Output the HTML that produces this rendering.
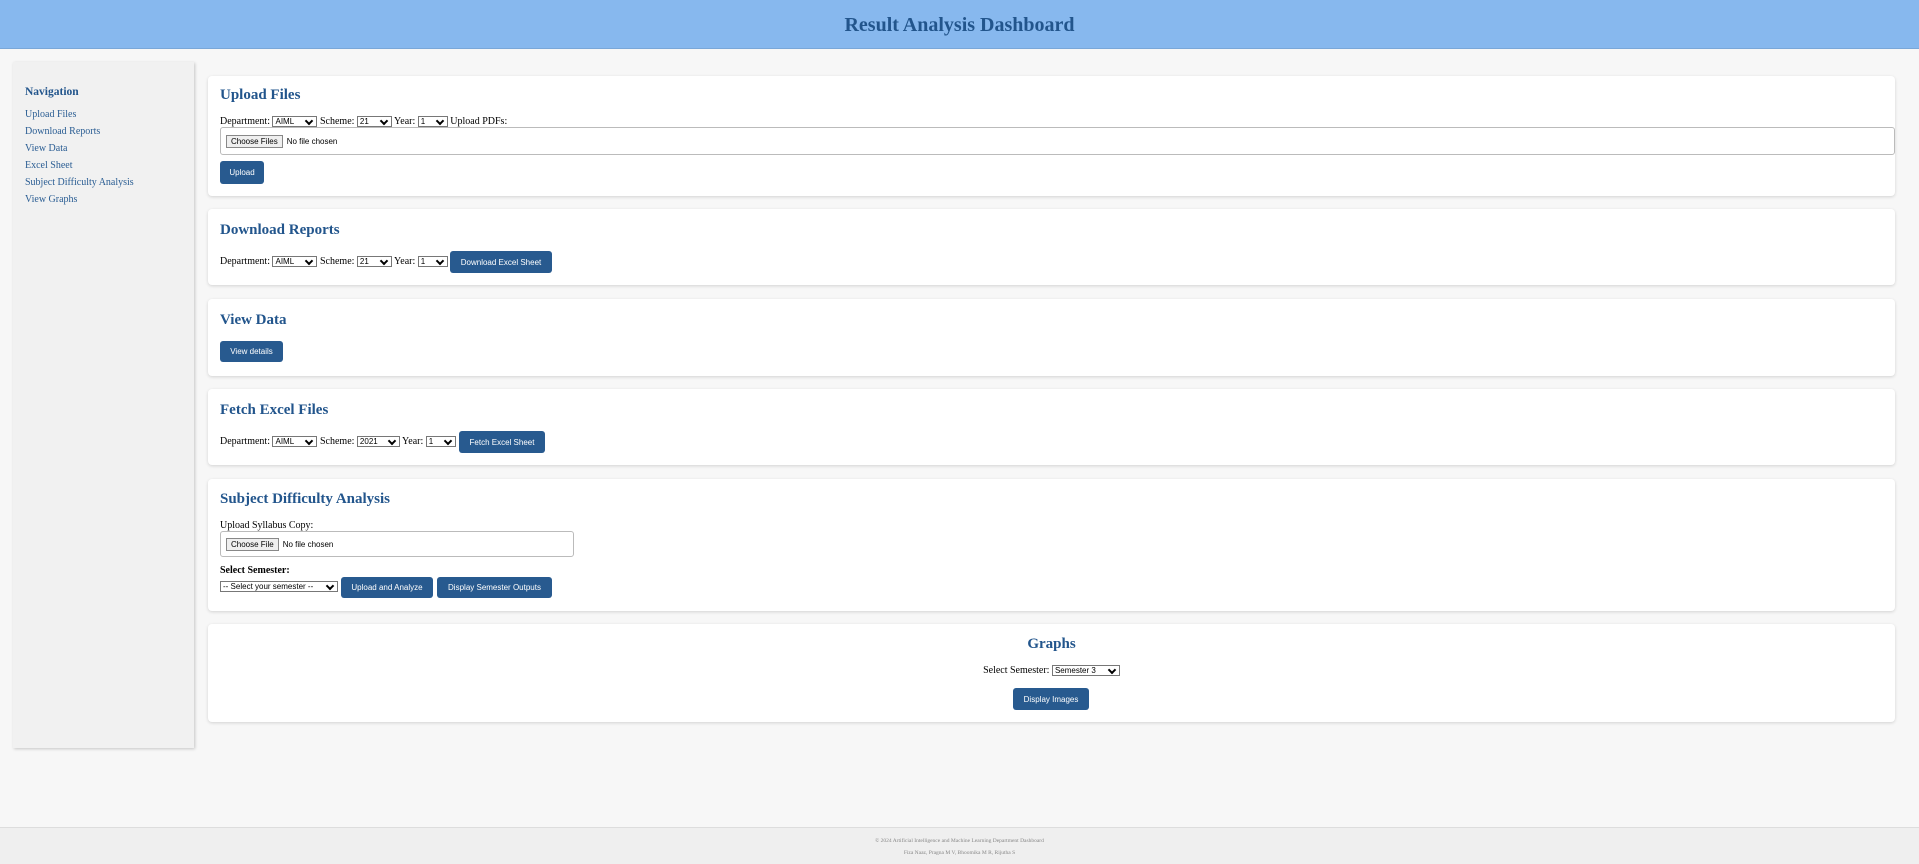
<!DOCTYPE html>
<html><head><meta charset="utf-8"><style>
*{box-sizing:border-box;margin:0;padding:0}
body{width:1919px;height:864px;background:#f7f7f7;font-family:"Liberation Serif",serif;font-size:10px;color:#000;position:relative;overflow:hidden}
.hdr{position:absolute;left:0;top:0;width:1919px;height:49px;background:#87b8ee;border-bottom:1px solid #7aa7d8;text-align:center;line-height:50px;font-weight:bold;font-size:20px;color:#22558c}
.side{position:absolute;left:13px;top:62px;width:181px;height:686px;background:#f1f1f1;box-shadow:1px 1px 3px rgba(0,0,0,.2)}
.side h3{position:absolute;left:12px;top:24px;font-size:11.5px;color:#22558c}
.side a{position:absolute;left:12px;color:#2a5d93;text-decoration:none;font-size:10px}
.card{position:absolute;left:208px;width:1687px;background:#fff;border-radius:4px;box-shadow:0 1px 3px rgba(0,0,0,.15)}
.card h2{position:absolute;left:12px;font-size:15px;color:#22558c}
.abs{position:absolute;white-space:nowrap}
.sel{display:inline-block;border:1px solid #777;height:11px;font:8px "Liberation Sans",sans-serif;line-height:9px;padding:0 2px;vertical-align:middle;background:#fff;position:relative}
.sel:after{content:"";position:absolute;right:4px;top:1px;width:4px;height:4px;border-right:2px solid #000;border-bottom:2px solid #000;transform:rotate(45deg)}
.btn{position:absolute;background:#285a8f;color:#fff;border-radius:3px;font:8px "Liberation Sans",sans-serif;display:flex;align-items:center;justify-content:center}
.file{position:absolute;border:1px solid #bbb;border-radius:3px;font:8px "Liberation Sans",sans-serif}
.cf{display:inline-block;border:1px solid #888;background:#efefef;padding:1px 4px;margin:0 4px 0 5px}
.foot{position:absolute;left:0;top:827px;width:1919px;height:37px;background:#efefef;border-top:1px solid #ddd;text-align:center;font-size:5.5px;color:#888}
</style></head><body>
<div class="hdr">Result Analysis Dashboard</div>
<div class="side"><h3>Navigation</h3>
<a style="top:47px">Upload Files</a><a style="top:64px">Download Reports</a><a style="top:81px">View Data</a><a style="top:98px">Excel Sheet</a><a style="top:115px">Subject Difficulty Analysis</a><a style="top:132px">View Graphs</a></div>

<div class="card" style="top:76px;height:120px">
<h2 style="top:11px">Upload Files</h2>
<div class="abs" style="left:12px;top:40px">Department: <span class="sel" style="width:45px">AIML</span> Scheme: <span class="sel" style="width:35px">21</span> Year: <span class="sel" style="width:30px">1</span> Upload PDFs:</div>
<div class="file" style="left:12px;top:51px;width:1675px;height:28px;padding-top:7px"><span class="cf">Choose Files</span>No file chosen</div>
<div class="btn" style="left:12px;top:85px;width:44px;height:23px">Upload</div>
</div>

<div class="card" style="top:209px;height:76px">
<h2 style="top:13px">Download Reports</h2>
<div class="abs" style="left:12px;top:47px">Department: <span class="sel" style="width:45px">AIML</span> Scheme: <span class="sel" style="width:35px">21</span> Year: <span class="sel" style="width:30px">1</span></div>
<div class="btn" style="left:242px;top:42px;width:102px;height:22px">Download Excel Sheet</div>
</div>

<div class="card" style="top:299px;height:77px">
<h2 style="top:13px">View Data</h2>
<div class="btn" style="left:12px;top:42px;width:63px;height:21px">View details</div>
</div>

<div class="card" style="top:389px;height:76px">
<h2 style="top:13px">Fetch Excel Files</h2>
<div class="abs" style="left:12px;top:47px">Department: <span class="sel" style="width:45px">AIML</span> Scheme: <span class="sel" style="width:43px">2021</span> Year: <span class="sel" style="width:30px">1</span></div>
<div class="btn" style="left:251px;top:42px;width:86px;height:22px">Fetch Excel Sheet</div>
</div>

<div class="card" style="top:479px;height:132px">
<h2 style="top:12px">Subject Difficulty Analysis</h2>
<div class="abs" style="left:12px;top:41px">Upload Syllabus Copy:</div>
<div class="file" style="left:12px;top:52px;width:354px;height:26px;padding-top:6px"><span class="cf">Choose File</span>No file chosen</div>
<div class="abs" style="left:12px;top:86px;font-weight:bold">Select Semester:</div>
<div class="abs" style="left:12px;top:102px"><span class="sel" style="width:118px">-- Select your semester --</span></div>
<div class="btn" style="left:133px;top:98px;width:92px;height:21px">Upload and Analyze</div>
<div class="btn" style="left:229px;top:98px;width:115px;height:21px">Display Semester Outputs</div>
</div>

<div class="card" style="top:624px;height:98px">
<h2 style="top:12px;left:0;width:100%;text-align:center">Graphs</h2>
<div class="abs" style="left:0;width:100%;text-align:center;top:41px;font-size:10px">Select Semester: <span class="sel" style="width:68px;text-align:left">Semester 3</span></div>
<div class="btn" style="left:805px;top:64px;width:76px;height:22px">Display Images</div>
</div>

<div class="foot"><div style="margin-top:10px">© 2024 Artificial Intelligence and Machine Learning Department Dashboard</div><div style="margin-top:6px">Fiza Naaz, Pragna M V, Bhoomika M R, Rijutha S</div></div>
</body></html>
